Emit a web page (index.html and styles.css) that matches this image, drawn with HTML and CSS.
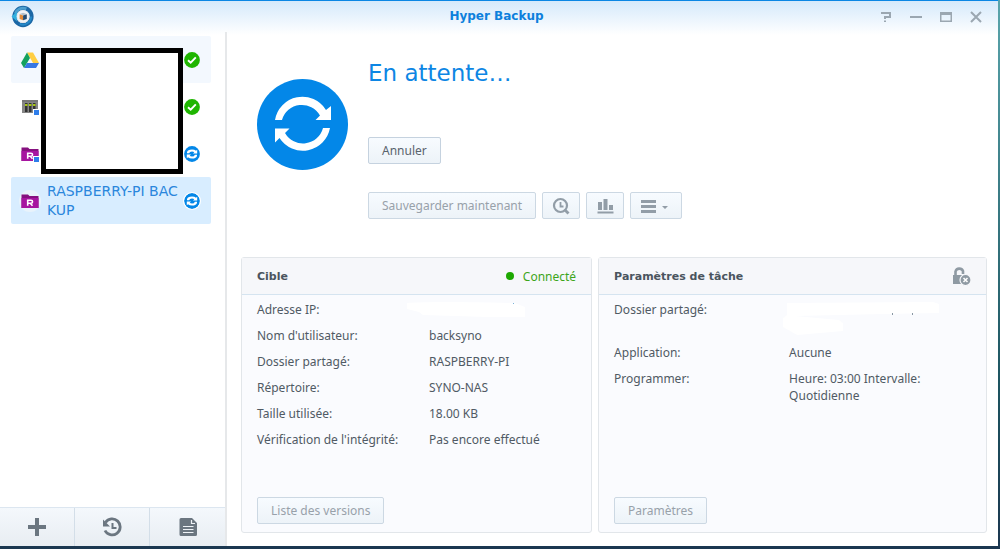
FILE: index.html
```html
<!DOCTYPE html>
<html lang="fr">
<head>
<meta charset="utf-8">
<meta name="viewport" content="width=device-width, initial-scale=1">
<title>Hyper Backup</title>
<link rel="stylesheet" href="styles.css">
</head>
<body>
<svg class="defs" aria-hidden="true">
  <symbol id="sync" viewBox="0 0 91 91">
    <circle cx="45.5" cy="45.5" r="45.5" fill="#0387e8"/>
    <g fill="#fff">
      <path d="M18 41A27.700 27.700 0 0 1 69 31L74 27V41H58.500L63 36.500A20.700 20.700 0 0 0 25 41Z"/>
      <path d="M73 49A27.700 27.700 0 0 1 22.500 59L18 63.500V49.500H32.500L28 54A20.700 20.700 0 0 0 66 49Z"/>
    </g>
  </symbol>
  <symbol id="sync-small" viewBox="0 0 16 16">
    <circle cx="8" cy="8" r="7.900" fill="#0387e8"/>
    <path d="M3 7.300V6.300Q3.500 3.500 8 3.500 10.500 3.500 12 4.800L13.200 3.800V7.400H9L10.300 6.200Q9.500 5.400 8 5.400 5.500 5.400 5.200 7.300ZM13 8.700V9.700Q12.500 12.500 8 12.500 5.500 12.500 4 11.200L2.800 12.200V8.600H7L5.700 9.800Q6.500 10.600 8 10.600 10.500 10.600 10.800 8.700Z" fill="#fff"/>
  </symbol>
  <symbol id="ok" viewBox="0 0 16 16">
    <circle cx="8" cy="8" r="7.900" fill="#1fb500"/>
    <path d="M4 8.200 6.700 10.700 11.800 5.300" fill="none" stroke="#fff" stroke-width="1.900"/>
  </symbol>
  <symbol id="folder" viewBox="0 0 18 16">
    <path d="M.5 1.500H7L8.500 3H17.500V15H.5Z" fill="#86117f"/>
    <path d="M.5 5H17.500V15H.5Z" fill="#a715a0"/>
    <path d="M6.700 12.800V7.200H10A1.400 1.400 0 0 1 10 10.300H6.700M9.300 10.300 11.500 12.800" fill="none" stroke="#fff" stroke-width="1.600"/>
  </symbol>
</svg>
<div class="window">
  <header class="titlebar">
    <svg class="logo" viewBox="0 0 24 24" aria-hidden="true">
      <circle cx="12.500" cy="12" r="9" fill="#fff" stroke="#1b67a5" stroke-width="4.200"/>
      <path d="M4.500 9A8.500 8.500 0 0 1 16 4" fill="none" stroke="#4c9fce" stroke-width="3"/>
      <path d="M21 12A8.500 8.500 0 0 1 9 19.700" fill="none" stroke="#2489c9" stroke-width="2"/>
      <path d="M.5 12 6 7V10H8V14H6V17Z" fill="#31b0df"/>
      <circle cx="12.500" cy="12" r="6.500" fill="#f1f4f7" stroke="#c8d3dc" stroke-width=".5"/>
      <path d="M9 9.500 12.500 8 16.500 9.500 12.700 11Z" fill="#b4c0ca"/>
      <path d="M9 9.700 12.600 11V16L9 14.700Z" fill="#e28a38"/>
      <path d="M12.600 11 16.500 9.700V14.700L12.600 16Z" fill="#264c70"/>
    </svg>
    <h1 class="title">Hyper Backup</h1>
    <div class="controls">
      <button type="button" aria-label="Aide"><svg viewBox="0 0 12 12"><path d="M1 2H10V6H5V8M5 9.500V11" /></svg></button>
      <button type="button" aria-label="Réduire"><svg viewBox="0 0 12 12"><path d="M0 6H12"/></svg></button>
      <button type="button" aria-label="Agrandir"><svg viewBox="0 0 12 12"><path d="M0 1H12V11H0ZM1.500 4V9.500H10.500V4Z" fill="#9ba7b1" fill-rule="evenodd" stroke="none"/></svg></button>
      <button type="button" aria-label="Fermer"><svg viewBox="0 0 12 12"><path d="M1 1 11 11M11 1 1 11"/></svg></button>
    </div>
  </header>
  <div class="content">
    <aside class="sidebar">
      <ul class="tasks">
        <li class="task task-hover">
          <svg class="task-icon" viewBox="0 0 18 16"><path d="M6 .5H12L18 11H12Z" fill="#ffce43"/><path d="M6 .5 9 6 3 16 0 11Z" fill="#14a15e"/><path d="M6 11H18L15 16H3Z" fill="#3777e3"/></svg>
          <span class="task-name"></span>
          <svg class="status" role="img" aria-label="Réussi"><use href="#ok"/></svg>
        </li>
        <li class="task">
          <svg class="task-icon" viewBox="0 0 18 16"><path d="M1 1H17V14H1Z" fill="#858585"/><path d="M1 1H17V3H1Z" fill="#777"/><path d="M4 4H6.500V13H4ZM8 4H10.500V13H8ZM12 4H14.500V13H12Z" fill="#333"/><path d="M4 5H6.500V7H4ZM8 5H10.500V7H8ZM12 5H14.500V7H12Z" fill="#a6c412"/><path d="M12 10H18V16H12Z" fill="#fff"/><path d="M13 11H18V16H13Z" fill="#2f7eea"/></svg>
          <span class="task-name"></span>
          <svg class="status" role="img" aria-label="Réussi"><use href="#ok"/></svg>
        </li>
        <li class="task">
          <svg class="task-icon" viewBox="0 0 18 16"><use href="#folder"/><path d="M12 10H18V16H12Z" fill="#fff"/><path d="M13 11H18V16H13Z" fill="#2f7eea"/></svg>
          <span class="task-name"></span>
          <svg class="status" role="img" aria-label="En cours"><use href="#sync-small"/></svg>
        </li>
        <li class="task task-selected">
          <svg class="task-icon task-icon-round" viewBox="0 0 18 16"><circle cx="9" cy="8" r="11" fill="#e9f3fb"/><use href="#folder"/></svg>
          <span class="task-name">RASPBERRY-PI BACKUP</span>
          <svg class="status status-ring" role="img" aria-label="En cours"><use href="#sync-small"/></svg>
        </li>
      </ul>
      <div class="mask"></div>
      <div class="side-actions">
        <button type="button" aria-label="Ajouter"><svg viewBox="0 0 20 20"><path d="M8 1H12V8H19V12H12V19H8V12H1V8H8Z" fill="#6b7680"/></svg></button>
        <button type="button" aria-label="Restaurer"><svg viewBox="0 0 20 20" fill="none" stroke="#6b7680"><path d="M3.500 5.500A8 8 0 1 1 3 13.500" stroke-width="2.800"/><path d="M1 2.500V9.500H8Z" fill="#6b7680" stroke="none"/><path d="M10.500 6V11H14.500" stroke-width="2"/></svg></button>
        <button type="button" aria-label="Journal"><svg viewBox="0 0 20 20"><path d="M3 1H14L19 6V17.500A1.500 1.500 0 0 1 17.500 19H3A1.500 1.500 0 0 1 1.500 17.500V2.500A1.500 1.500 0 0 1 3 1Z" fill="#6b7680"/><path d="M13.500 3V6.500H17M5 9.500H15.500M5 12.500H15.500M5 15.500H15.500" fill="none" stroke="#eef2f6" stroke-width="1.200"/></svg></button>
      </div>
    </aside>
    <main class="main">
      <section class="summary">
        <svg class="big-sync" aria-hidden="true"><use href="#sync"/></svg>
        <div class="summary-body">
          <h2 class="state">En attente…</h2>
          <button type="button" class="btn btn-active">Annuler</button>
          <div class="toolbar">
            <button type="button" class="btn">Sauvegarder maintenant</button>
            <button type="button" class="btn btn-icon" aria-label="Explorateur de sauvegarde"><svg viewBox="0 0 18 18" fill="none" stroke="#929da7"><circle cx="8.500" cy="8.500" r="6.500" stroke-width="2.200"/><path d="M8.500 5V9.500H11.500" stroke-width="1.800"/><path d="M12.500 12.500 16.500 16.500" stroke-width="2.800"/></svg></button>
            <button type="button" class="btn btn-icon" aria-label="Statistiques"><svg viewBox="0 0 18 18"><path d="M2 5H6V13H2ZM7.500 2H11.500V13H7.500ZM13 8H17V13H13ZM1.500 14.500H17.500V16.500H1.500Z" fill="#929da7"/></svg></button>
            <button type="button" class="btn btn-menu" aria-label="Plus"><svg viewBox="0 0 28 18"><path d="M1 3H16V6H1ZM1 8H16V11H1ZM1 13H16V16H1ZM22 9H28L25 12Z" fill="#929da7"/></svg></button>
          </div>
        </div>
      </section>
      <div class="cards">
        <section class="card card-target">
          <header class="card-head"><h3>Cible</h3><span class="connected">Connecté</span></header>
          <dl class="facts">
            <dt>Adresse IP:</dt><dd><svg class="smear" viewBox="0 0 120 17" aria-hidden="true"><path d="M0 2Q20 0 108 2L118 6V16H80L16 14 12 11 0 8Z" fill="#fff"/><path d="M106 2H107V3H106Z" fill="#7ab3da"/></svg></dd>
            <dt>Nom d'utilisateur:</dt><dd>backsyno</dd>
            <dt>Dossier partagé:</dt><dd>RASPBERRY-PI</dd>
            <dt>Répertoire:</dt><dd>SYNO-NAS</dd>
            <dt>Taille utilisée:</dt><dd>18.00 KB</dd>
            <dt>Vérification de l'intégrité:</dt><dd>Pas encore effectué</dd>
          </dl>
          <button type="button" class="btn">Liste des versions</button>
        </section>
        <section class="card card-settings">
          <header class="card-head"><h3>Paramètres de tâche</h3>
            <svg class="lock" viewBox="0 0 20 20" role="img" aria-label="Non chiffré"><path d="M4.500 9V5.500A4 4 0 0 1 12 5V8" fill="none" stroke="#8f9aa3" stroke-width="2.600"/><path d="M2 9H14V18H2Z" fill="#8f9aa3"/><circle cx="14.500" cy="14" r="5.500" fill="#8f9aa3" stroke="#f6f7fa" stroke-width="1.200"/><path d="M12.500 12 16.500 16M16.500 12 12.500 16" stroke="#fff" stroke-width="1.500"/></svg>
          </header>
          <dl class="facts">
            <dt>Dossier partagé:</dt><dd><svg class="smear smear-tall" viewBox="0 0 160 34" aria-hidden="true"><path d="M4 2 150 1 156 3V12L100 13 12 15 56 19 60 22V30L14 34 0 26V17L4 14Z" fill="#fff"/><path d="M109 12H110V14H109ZM129 12H130V14H129Z" fill="#8997a3"/></svg></dd>
            <dt>Application:</dt><dd>Aucune</dd>
            <dt>Programmer:</dt><dd>Heure: 03:00 Intervalle:<br>Quotidienne</dd>
          </dl>
          <button type="button" class="btn">Paramètres</button>
        </section>
      </div>
    </main>
  </div>
</div>
</body>
</html>
```
FILE: styles.css
```css
* { box-sizing: border-box; }
body {
  margin: 0;
  min-height: 100vh;
  display: flex;
  padding: 0 2px 3px 0;
  background: linear-gradient(#5aa5ac, #1d5460 70%, #1b3750);
  font: 12px/17px "Noto Sans", Verdana, sans-serif;
  color: #505a64;
}
h1, h2, h3, ul, dl, dd { margin: 0; padding: 0; }
button { font: inherit; color: inherit; cursor: pointer; }
svg { display: block; flex: none; }
.defs { position: absolute; width: 0; height: 0; }

.window {
  flex: 1;
  display: flex;
  flex-direction: column;
  background: #fff linear-gradient(#d5e9fb, #fff) no-repeat 0 0 / 100% 34px;
  border-top: 1px solid #0a86e4;
}
.titlebar {
  display: grid;
  grid-template-columns: 1fr auto 1fr;
  align-items: center;
  height: 31px;
  padding: 0 16px 0 11px;
}
.logo { width: 23px; height: 23px; }
.title, .state, .task-name, .card-head h3 { font-family: "DejaVu Sans", Verdana, sans-serif; }
.title { font-size: 12px; color: #0d80dc; }
.controls { display: flex; justify-content: flex-end; gap: 18px; }
.controls button { padding: 0; border: 0; background: none; }
.controls svg { width: 12px; height: 12px; fill: none; stroke: #9ba7b1; stroke-width: 2; }

.content { flex: 1; display: flex; }
.sidebar {
  position: relative;
  width: 227px;
  display: flex;
  flex-direction: column;
  border-right: 2px solid #e6e8ea;
}
.tasks { flex: 1; list-style: none; padding: 4px 14px 0 11px; }
.task {
  display: flex;
  align-items: center;
  gap: 8px;
  min-height: 47px;
  padding: 0 11px 0 10px;
  border-radius: 2px;
}
.task-hover { background: #f3f8fe; }
.task-selected { background: #d8edff; }
.task-icon { width: 18px; height: 16px; }
.task-icon-round { overflow: visible; }
.task-name {
  flex: 1;
  font-size: 14px;
  line-height: 19px;
  color: #2a86dc;
  word-break: break-all;
}
.status { width: 16px; height: 16px; margin-left: -8px; }
.status-ring { border-radius: 50%; background: #fff; box-shadow: 0 0 0 1px #fff; }
.mask {
  position: absolute;
  left: 41px;
  top: 16px;
  width: 142px;
  height: 126px;
  border: 5px solid #000;
  background: #fff;
}
.side-actions {
  display: grid;
  grid-template-columns: repeat(3, 1fr);
  height: 39px;
  border-top: 1px solid #dce6f0;
  background: linear-gradient(#f4f8fc, #e8edf2);
}
.side-actions button {
  display: grid;
  place-items: center;
  padding: 0;
  border: 0;
  border-right: 1px solid #d3dee8;
  background: none;
}
.side-actions button:last-child { border-right: 0; }
.side-actions svg { width: 20px; height: 20px; }

.main {
  flex: 1;
  display: flex;
  flex-direction: column;
  padding: 27px 11px 13px 14px;
}
.summary { display: flex; gap: 20px; padding-left: 16px; }
.big-sync { width: 91px; height: 91px; margin-top: 20px; }
.state {
  margin-bottom: 50px;
  font-size: 23px;
  line-height: 28px;
  font-weight: 400;
  color: #0d86e4;
}
.btn {
  height: 27px;
  padding: 0 13px;
  border: 1px solid #ccd8e3;
  border-radius: 2px;
  background: linear-gradient(#f7fbff, #edf3f8);
  color: #98a1aa;
}
.btn-active { color: #59636d; border-color: #c5d2df; }
.toolbar { display: flex; gap: 6px; margin-top: 28px; }
.btn-icon { padding: 0 9px; }
.btn-icon svg { width: 18px; height: 18px; }
.btn-menu { padding: 0 13px 0 9px; }
.btn-menu svg { width: 28px; height: 18px; }

.cards { flex: 1; display: flex; gap: 6px; margin-top: 38px; }
.card {
  display: flex;
  flex-direction: column;
  align-items: flex-start;
  min-width: 0;
  padding-bottom: 8px;
  border: 1px solid #e2e6ea;
  border-radius: 3px;
  background: #fafbfe;
}
.card-target { flex: 351 1 0; }
.card-settings { flex: 389 1 0; }
.card-head {
  align-self: stretch;
  display: flex;
  justify-content: space-between;
  align-items: center;
  height: 37px;
  padding: 0 15px;
  border-bottom: 1px solid #d5e4f0;
  background: #f6f7fa;
}
.card-head h3 { font-size: 11px; color: #4a545e; }
.connected { display: flex; align-items: center; gap: 9px; color: #3da51a; }
.connected::before { content: ""; width: 8px; height: 8px; border-radius: 50%; background: #1da800; }
.lock { width: 20px; height: 20px; }
.facts {
  display: grid;
  grid-template-columns: 172px 1fr;
  align-self: stretch;
  row-gap: 9px;
  padding: 6px 15px 0;
}
.card-settings .facts { grid-template-columns: 175px 1fr; }
.smear { width: 120px; height: 17px; margin-left: -22px; }
.smear-tall { width: 160px; height: 34px; margin-left: -6px; }
.card > .btn { margin: auto 0 0 15px; }
```
